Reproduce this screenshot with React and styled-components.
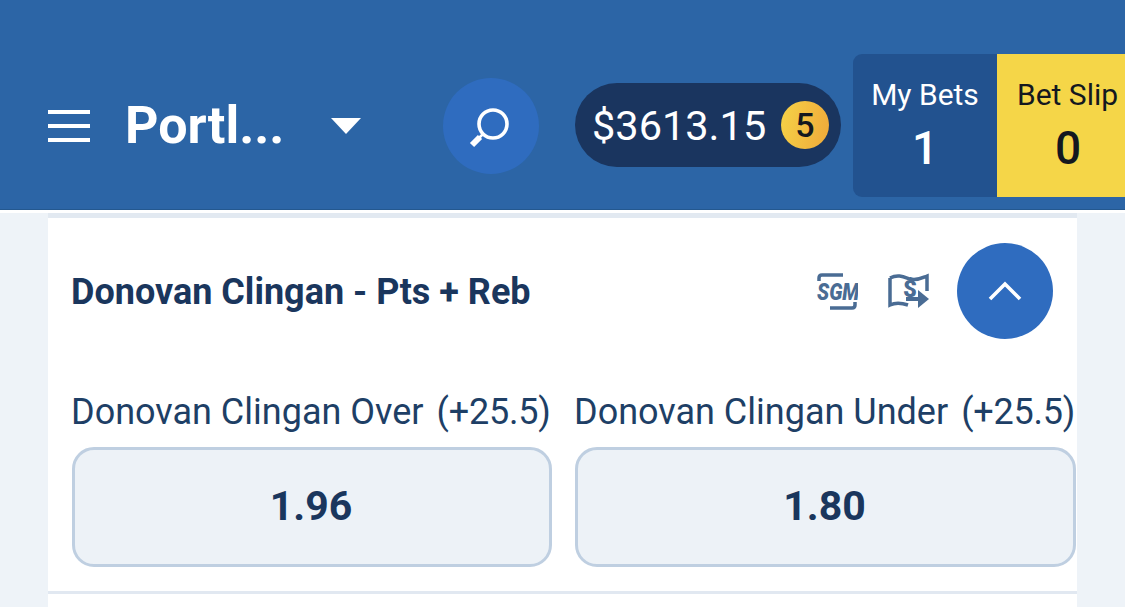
import React from 'react';
import styled, { createGlobalStyle } from 'styled-components';

const GlobalStyle = createGlobalStyle`
  html, body {
    margin: 0;
    padding: 0;
    height: 607px;
    overflow: hidden;
    background: #eef3f8;
    font-family: Roboto, "Liberation Sans", sans-serif;
  }
  * { box-sizing: border-box; }
`;

const Page = styled.div`
  width: 1125px;
  height: 607px;
  overflow: hidden;
  display: flex;
  flex-direction: column;
`;

const Header = styled.header`
  flex: none;
  height: 210px;
  background: #2c65a6;
  border-bottom: 1px solid #24588f;
  padding: 54px 0 12px 48px;
  display: flex;
  align-items: stretch;
`;

const Location = styled.div`
  width: 395px;
  display: flex;
  align-items: center;
`;

const Burger = styled.button`
  width: 42px;
  height: 32px;
  padding: 0;
  border: 0;
  background: transparent;
  display: flex;
  flex-direction: column;
  justify-content: space-between;
  & > span {
    display: block;
    height: 4px;
    background: #fff;
  }
`;

const LocationName = styled.span`
  margin-left: 35px;
  width: 206px;
  font-size: 52px;
  font-weight: 700;
  color: #fff;
`;

const Caret = styled.span`
  width: 0;
  height: 0;
  border-left: 15px solid transparent;
  border-right: 15px solid transparent;
  border-top: 16px solid #fff;
`;

const SearchButton = styled.button`
  flex: none;
  width: 96px;
  height: 96px;
  margin-top: 24px;
  padding: 0;
  border: 0;
  border-radius: 50%;
  background: #2f6cbf;
  display: flex;
  align-items: center;
  justify-content: center;
`;

const Balance = styled.div`
  flex: none;
  width: 266px;
  height: 84px;
  margin: 29px 0 0 36px;
  padding: 0 12px 0 17px;
  border-radius: 42px;
  background: #1a355f;
  display: flex;
  align-items: center;
  justify-content: space-between;
  font-size: 41.5px;
  font-weight: 400;
  color: #fff;
`;

const Coin = styled.span`
  width: 48px;
  height: 48px;
  border-radius: 50%;
  background: linear-gradient(100deg, #f6d247, #efa93a);
  display: flex;
  align-items: center;
  justify-content: center;
  font-size: 34px;
  font-weight: 500;
  color: #14181f;
`;

const Tabs = styled.div`
  flex: none;
  margin-left: 12px;
  display: flex;
`;

const Tab = styled.div`
  width: ${p => (p.$slip ? 128 : 144)}px;
  padding: 23px 0 0 ${p => (p.$slip ? 20 : 0)}px;
  background: ${p => (p.$slip ? '#f5d648' : '#22528f')};
  border-radius: ${p => (p.$slip ? '0' : '9px 0 0 9px')};
  color: ${p => (p.$slip ? '#14181f' : '#fff')};
  display: flex;
  flex-direction: column;
  align-items: center;
  align-self: stretch;
  overflow: hidden;
  white-space: nowrap;
`;

const TabLabel = styled.span`
  font-size: 30px;
  line-height: 36px;
  font-weight: 400;
  align-self: ${p => (p.$slip ? 'flex-start' : 'center')};
`;

const TabCount = styled.span`
  margin-top: 8px;
  font-size: 46px;
  line-height: 54px;
  font-weight: 500;
  margin-left: ${p => (p.$slip ? '-6px' : '0')};
`;

const Content = styled.main`
  flex: 1;
  padding: 3px 48px 0;
  background: linear-gradient(#fff 3px, transparent 3px);
  display: flex;
  flex-direction: column;
`;

const Market = styled.section`
  background: #fff;
  border-top: 5px solid #e2e9f1;
  border-bottom: 3px solid #e1e8f1;
  height: 381px;
  flex: none;
  padding: 0 0 0 24px;
`;

const NextMarket = styled.section`
  flex: 1;
  background: #fff;
`;

const MarketHead = styled.div`
  height: 121px;
  margin-bottom: 46px;
  padding: 25px 24px 0 0;
  display: flex;
  align-items: center;
`;

const MarketTitle = styled.h2`
  flex: 1;
  margin: 2px 0 0 -1px;
  font-size: 36px;
  font-weight: 700;
  color: #1a365d;
`;

const MarketIcons = styled.div`
  display: flex;
  align-items: center;
  gap: 30px;
  margin-right: 27px;
`;

const CollapseButton = styled.button`
  flex: none;
  width: 96px;
  height: 96px;
  padding: 0;
  border: 0;
  border-radius: 50%;
  background: #2f6cbf;
  display: flex;
  align-items: center;
  justify-content: center;
`;

const Selections = styled.div`
  display: grid;
  grid-template-columns: 480px 501px;
  column-gap: 23px;
`;

const Selection = styled.div`
  display: flex;
  flex-direction: column;
  min-width: 0;
`;

const SelectionLabel = styled.div`
  height: 44px;
  margin-top: 7px;
  margin-left: -1px;
  margin-right: -6px;
  font-size: 36px;
  line-height: 40px;
  font-weight: 400;
  color: #1e3f66;
  white-space: nowrap;
  display: flex;
  gap: 13px;
`;

const LineValue = styled.span`
  letter-spacing: -0.2px;
`;

const OddsButton = styled.button`
  width: 100%;
  height: 120px;
  margin-top: 11px;
  padding: 0 2px 3px 0;
  border: 3px solid #bfcfe1;
  border-radius: 22px;
  background: #edf2f7;
  font-family: inherit;
  font-size: 41px;
  font-weight: 700;
  color: #1a365d;
`;

const SEL = [
  { name: 'Donovan Clingan Over', line: '(+25.5)', odds: '1.96' },
  { name: 'Donovan Clingan Under', line: '(+25.5)', odds: '1.80' }
];

const SearchIcon = () => (
  <svg width="44" height="44" viewBox="0 0 44 44" fill="none" stroke="#fff">
    <circle cx="24" cy="20" r="14" strokeWidth="3.6" />
    <path d="M14 30 L10 34" strokeWidth="2.5" />
    <path d="M11 33 L3 41" strokeWidth="6" />
  </svg>
);

const ChevronUp = () => (
  <svg width="34" height="22" viewBox="0 0 34 22" fill="none" stroke="#fff" strokeWidth="3.6">
    <path d="M2 19 L17 4 L32 19" />
  </svg>
);

const SgmIcon = () => (
  <svg width="42" height="38" viewBox="0 0 42 38" fill="none" stroke="#4a6c94" strokeWidth="3.5">
    <path d="M3 9 V6 Q3 3 6 3 H27" />
    <path d="M14 36 H36 Q39 36 39 33 V30" />
    <text
      transform="translate(1 28) scale(1 1.2)"
      fontFamily="Roboto, sans-serif"
      fontSize="20"
      fontWeight="900"
      fontStyle="italic"
      fill="#4a6c94"
      stroke="none"
    >
      SGM
    </text>
  </svg>
);

const CashIcon = () => (
  <svg width="42" height="36" viewBox="0 0 42 36" fill="none" stroke="#4a6c94" strokeWidth="3.5">
    <path d="M2 5 C10 1 16 4 22 6 C29 8 34 5 39 3 V18" />
    <path d="M2 5 V32 C8 29 14 30 20 32" />
    <path d="M18 26 H32" strokeWidth="4" />
    <path d="M30 17 L41 26 L30 35" fill="#4a6c94" stroke="none" />
    <text
      x="15"
      y="24"
      fontFamily="Roboto, sans-serif"
      fontSize="24"
      fontWeight="900"
      fill="#4a6c94"
      stroke="none"
    >
      $
    </text>
  </svg>
);

export default function App() {
  return (
    <Page>
      <GlobalStyle />
      <Header>
        <Location>
          <Burger>
            <span />
            <span />
            <span />
          </Burger>
          <LocationName>Portl...</LocationName>
          <Caret />
        </Location>
        <SearchButton>
          <SearchIcon />
        </SearchButton>
        <Balance>
          $3613.15
          <Coin>5</Coin>
        </Balance>
        <Tabs>
          <Tab>
            <TabLabel>My Bets</TabLabel>
            <TabCount>1</TabCount>
          </Tab>
          <Tab $slip>
            <TabLabel $slip>Bet Slip</TabLabel>
            <TabCount $slip>0</TabCount>
          </Tab>
        </Tabs>
      </Header>
      <Content>
        <Market>
          <MarketHead>
            <MarketTitle>Donovan Clingan - Pts + Reb</MarketTitle>
            <MarketIcons>
              <SgmIcon />
              <CashIcon />
            </MarketIcons>
            <CollapseButton>
              <ChevronUp />
            </CollapseButton>
          </MarketHead>
          <Selections>
            {SEL.map(s => (
              <Selection key={s.name}>
                <SelectionLabel>
                  <span>{s.name}</span>
                  <LineValue>{s.line}</LineValue>
                </SelectionLabel>
                <OddsButton>{s.odds}</OddsButton>
              </Selection>
            ))}
          </Selections>
        </Market>
        <NextMarket />
      </Content>
    </Page>
  );
}
